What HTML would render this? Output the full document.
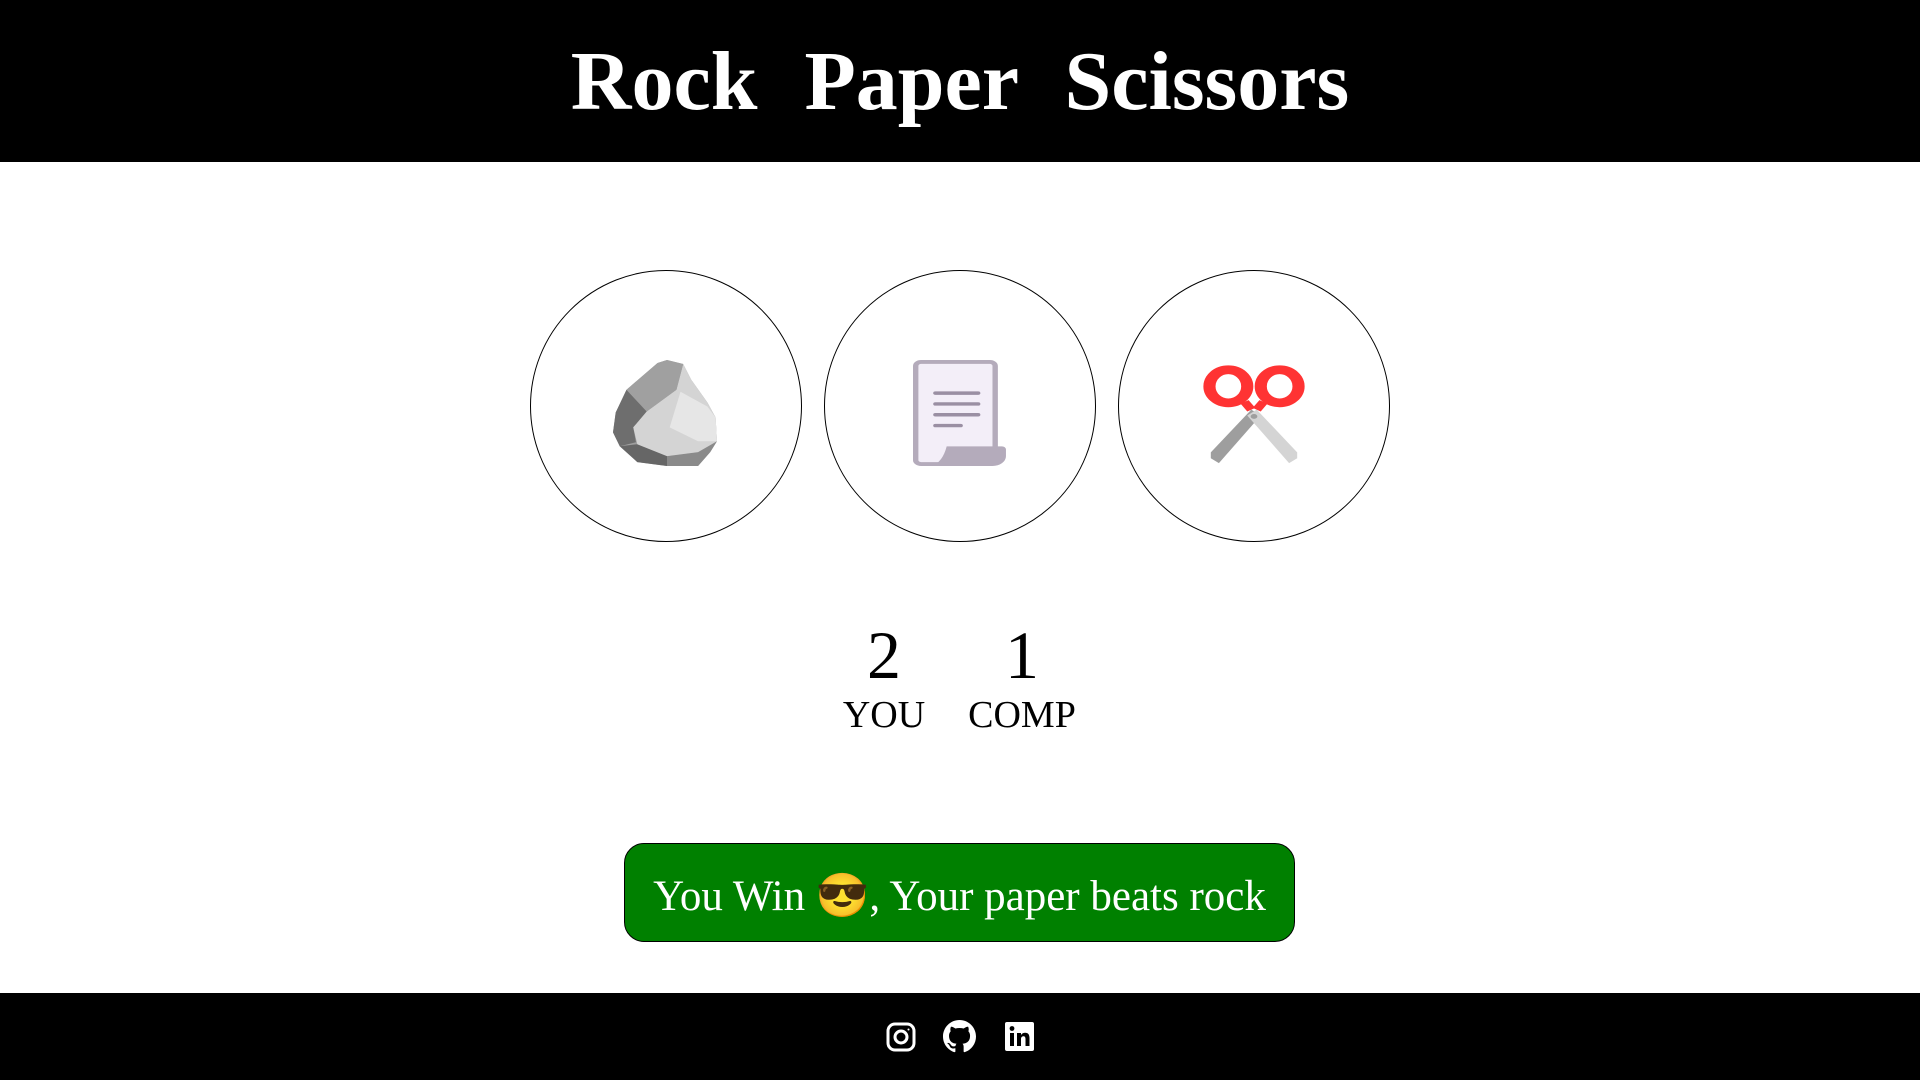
<!DOCTYPE html>
<html><head><meta charset="utf-8"><style>
*{margin:0;padding:0;box-sizing:border-box}
body{width:1920px;height:1080px;background:#fff;font-family:"Liberation Serif",serif;position:relative;overflow:hidden}
header{position:absolute;left:0;top:0;width:1920px;height:162px;background:#000;color:#fff;text-align:center}
header h1{font-size:84px;font-weight:bold;line-height:164px;word-spacing:26px}
.c{position:absolute;top:270px;width:272px;height:272px;border:1px solid #000;border-radius:50%}
.c svg{position:absolute}
.s{position:absolute;text-align:center;width:120px}
.n{font-size:68px;top:616px}
.l{font-size:38px;top:693px}
.btn{position:absolute;left:624px;top:843px;width:671px;height:99px;background:#008000;border:1px solid #000;border-radius:20px;color:#fff;font-size:43px;text-align:center;line-height:105px}
footer{position:absolute;left:0;top:993px;width:1920px;height:87px;background:#000}
footer svg{position:absolute}
</style></head><body>
<header><h1>Rock Paper Scissors</h1></header>

<div class="c" style="left:530px">
<svg style="left:82px;top:89px" width="108" height="109" viewBox="0 0 80 110" preserveAspectRatio="none">
<polygon points="40,0 52,4 58,20 70,43 76,58 77,82 72,93 63,107 40,107 18,103 5,87 0,73 2,53 10,30 33,3" fill="#9e9e9e"/>
<polygon points="10,30 25,52 15,68 17,83 5,87 0,73 2,53" fill="#6e6e6e"/>
<polygon points="5,87 18,85 40,97 40,107 18,103" fill="#666"/>
<polygon points="40,97 63,93 77,82 72,93 63,107 40,107" fill="#8a8a8a"/>
<polygon points="25,52 47,30 52,4 58,20 70,43 76,58 77,82 63,93 40,97 18,85 15,68" fill="#d4d4d4"/>
<polygon points="50,32 70,47 76,58 77,82 63,82 45,70 42,68" fill="#e6e6e6"/>
<polygon points="40,0 52,4 47,30 25,52 10,30 33,3" fill="#a0a0a0"/>
</svg></div>

<div class="c" style="left:824px">
<svg style="left:88px;top:89px" width="97" height="108" viewBox="0 0 72 110" preserveAspectRatio="none">
<rect x="2" y="2" width="59" height="104" rx="4" fill="#f3eef8" stroke="#b4abbb" stroke-width="4"/>
<rect x="15" y="32" width="35" height="3.5" rx="1.7" fill="#9a8fa3"/>
<rect x="15" y="43" width="35" height="3.5" rx="1.7" fill="#9a8fa3"/>
<rect x="15" y="54" width="35" height="3.5" rx="1.7" fill="#9a8fa3"/>
<rect x="15" y="65" width="22" height="3.5" rx="1.7" fill="#9a8fa3"/>
<path d="M25 88 H66 a3 3 0 0 1 3 3 V98 a10 10 0 0 1 -10 10 H14 Q22 104 25 88Z" fill="#b4abbb"/>
</svg></div>

<div class="c" style="left:1118px">
<svg style="left:81px;top:92px" width="108" height="103" viewBox="0 0 80 106" preserveAspectRatio="none">
<polygon points="38,48 45,54 14,103 8,98 8,92" fill="#9e9e9e"/>
<polygon points="42,48 35,54 66,103 72,98 72,92" fill="#d4d4d4"/>
<circle cx="40" cy="55" r="2.5" fill="#9e9e9e"/>
<path d="M38 48 L33 40" stroke="#f33" stroke-width="7"/>
<path d="M42 48 L47 40" stroke="#f33" stroke-width="7"/>
<ellipse cx="21" cy="24" rx="14" ry="17" fill="none" stroke="#f33" stroke-width="9"/>
<ellipse cx="59" cy="24" rx="14" ry="17" fill="none" stroke="#f33" stroke-width="9"/>
</svg></div>

<div class="s n" style="left:824px">2</div>
<div class="s n" style="left:962px">1</div>
<div class="s l" style="left:824px">YOU</div>
<div class="s l" style="left:962px">COMP</div>

<div class="btn">You Win 😎, Your paper beats rock</div>

<footer>
<svg style="left:886px;top:29px" width="30" height="30" viewBox="0 0 30 30" fill="none" stroke="#fff" stroke-width="3">
<rect x="2" y="2" width="26" height="26" rx="7"/><circle cx="15" cy="15" r="6"/><circle cx="22.5" cy="7.5" r="1" fill="#fff" stroke="none"/></svg>
<svg style="left:943px;top:27px" width="33" height="33" viewBox="0 0 16 16" fill="#fff">
<path d="M8 0C3.58 0 0 3.58 0 8c0 3.54 2.290 6.53 5.47 7.590.4.07.55-.17.55-.38 0-.19-.01-.82-.01-1.49-2.01.37-2.53-.49-2.69-.94-.09-.23-.48-.94-.82-1.130-.28-.15-.68-.52-.01-.53.63-.01 1.080.58 1.230.82.72 1.210 1.870.87 2.330.66.07-.52.28-.87.51-1.07-1.78-.2-3.64-.89-3.64-3.950 0-.87.31-1.59.82-2.15-.08-.2-.36-1.02.08-2.12 0 0 .67-.21 2.2.82.64-.18 1.32-.27 2-.27.68 0 1.36.09 2 .27 1.53-1.04 2.2-.82 2.2-.82.44 1.1.16 1.92.08 2.12.51.56.82 1.27.82 2.15 0 3.07-1.87 3.75-3.65 3.95.29.25.54.73.54 1.48 0 1.07-.01 1.93-.01 2.2 0 .21.15.46.55.38A8.013 8.013 0 0016 8c0-4.42-3.58-8-8-8z"/></svg>
<svg style="left:1005px;top:29px" width="29" height="29" viewBox="0 0 29 29">
<rect width="29" height="29" rx="2" fill="#fff"/>
<rect x="5" y="11" width="4" height="13" fill="#000"/><circle cx="7" cy="6.5" r="2.4" fill="#000"/>
<path d="M12 11h4v2c1-1.6 2.5-2.3 4.2-2.3 3 0 4.3 2 4.3 5.3V24h-4v-7c0-1.8-.6-2.8-2-2.8-1.6 0-2.5 1.1-2.5 2.8V24h-4z" fill="#000"/></svg>
</footer>
</body></html>
